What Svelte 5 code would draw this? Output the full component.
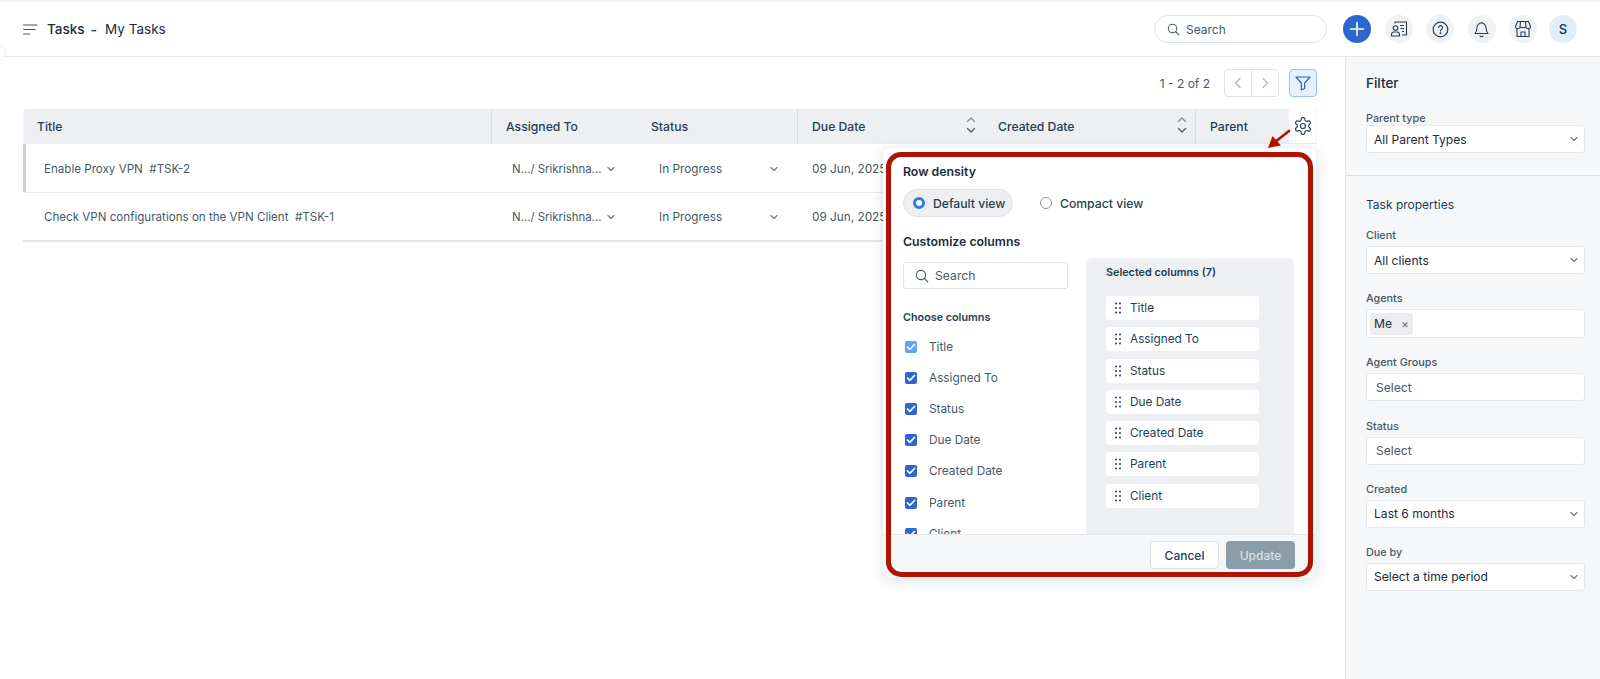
<script>
  const rows = ['Enable Proxy VPN  #TSK-2', 'Check VPN configurations on the VPN Client  #TSK-1'];
  const cols = ['Title', 'Assigned To', 'Status', 'Due Date', 'Created Date', 'Parent', 'Client'];
</script>

{#snippet chevron()}
  <svg class="chev" width="10" height="10" viewBox="0 0 10 10"><path d="M2 3.500 5 6.500 8 3.500" fill="none" stroke="#60758a" stroke-width="1.100" stroke-linecap="round" stroke-linejoin="round"/></svg>
{/snippet}
{#snippet sort()}
  <svg class="sort" width="10" height="18" viewBox="0 0 10 18"><path d="M1.500 5.500 5 2 8.500 5.500" fill="none" stroke="#7e8f9f" stroke-width="1.200" stroke-linecap="round" stroke-linejoin="round"/><path d="M1.500 12.500 5 16 8.500 12.500" fill="none" stroke="#475867" stroke-width="1.200" stroke-linecap="round" stroke-linejoin="round"/></svg>
{/snippet}
{#snippet mag(size)}
  <svg width={size} height={size} viewBox="0 0 14 14"><circle cx="6" cy="6" r="4.600" fill="none" stroke="#475867" stroke-width="1.100"/><path d="M9.500 9.500 12.800 12.800" stroke="#475867" stroke-width="1.100" stroke-linecap="round"/></svg>
{/snippet}
{#snippet grip()}
  <svg width="6" height="12" viewBox="0 0 6 12" fill="#283d52"><circle cx="1" cy="1.500" r="1"/><circle cx="5" cy="1.500" r="1"/><circle cx="1" cy="6" r="1"/><circle cx="5" cy="6" r="1"/><circle cx="1" cy="10.500" r="1"/><circle cx="5" cy="10.500" r="1"/></svg>
{/snippet}

<div class="page">
  <header class="topbar">
    <div class="head-left">
      <svg width="15" height="11" viewBox="0 0 15 11"><path d="M.500 1h13.500M.500 5.500h11.500M.500 10h6" stroke="#475867" stroke-width="1.100" stroke-linecap="round"/></svg>
      <span class="crumb">Tasks</span><span class="dash">-</span><span class="crumb">My Tasks</span>
    </div>
    <div class="head-right">
      <div class="gsearch">{@render mag(13)}<span>Search</span></div>
      <div class="round plus"><svg width="16" height="16" viewBox="0 0 16 16"><path d="M8 1.500v13M1.500 8h13" stroke="#fff" stroke-width="1.600" stroke-linecap="round"/></svg></div>
      <div class="round"><svg width="18" height="18" viewBox="0 0 18 18" fill="none" stroke="#283d52" stroke-width="1.100"><path d="M5 3.500V2h11.500v13H12"/><path d="M10 5.500h4M10.500 8.500h3.500M12 11.500h2"/><circle cx="5.500" cy="8" r="2.300"/><path d="M1.500 16v-1.500A2.500 2.500 0 0 1 4 12h3a2.500 2.500 0 0 1 2.500 2.500V16z"/></svg></div>
      <div class="round"><svg width="17" height="17" viewBox="0 0 17 17" fill="none" stroke="#283d52" stroke-width="1.200"><circle cx="8.500" cy="8.500" r="7.300"/><path d="M6.500 6.600a2 2 0 1 1 3 1.800c-.7.4-1 .8-1 1.600" stroke-linecap="round"/><circle cx="8.500" cy="12.300" r=".4" fill="#283d52"/></svg></div>
      <div class="round"><svg width="17" height="17" viewBox="0 0 17 17" fill="none" stroke="#283d52" stroke-width="1.100" stroke-linejoin="round"><path d="M8.500 2a4.500 4.500 0 0 0-4.500 4.500c0 3.500-1.200 5-2 6h13c-.8-1-2-2.500-2-6A4.500 4.500 0 0 0 8.500 2z"/><path d="M6.800 14.500a1.800 1.800 0 0 0 3.400 0M8.500 1v1"/></svg></div>
      <div class="round"><svg width="18" height="18" viewBox="0 0 18 18" fill="none" stroke="#283d52" stroke-width="1.100" stroke-linejoin="round"><path d="M3.500 1.500h11l2 5a2.300 2.300 0 0 1-4.500.600 2.400 2.400 0 0 1-3 0 2.400 2.400 0 0 1-3 0 2.300 2.300 0 0 1-4.500-.600z"/><path d="M3 9v7.500h12V9"/><path d="M7 16.500V12h4v4.500M6.500 1.500 6 7M11.500 1.500 12 7"/></svg></div>
      <div class="round avatar">S</div>
    </div>
  </header>
  <span class="handle"></span>

  <div class="content">
    <main class="main">
      <div class="pager">
        <span class="count">1 - 2 of 2</span>
        <div class="pgroup">
          <span class="pbtn"><svg width="8" height="12" viewBox="0 0 8 12"><path d="M6 1.500 1.500 6 6 10.500" fill="none" stroke="#a9b6c2" stroke-width="1.200" stroke-linecap="round" stroke-linejoin="round"/></svg></span>
          <span class="pbtn second"><svg width="8" height="12" viewBox="0 0 8 12"><path d="M2 1.500 6.500 6 2 10.500" fill="none" stroke="#a9b6c2" stroke-width="1.200" stroke-linecap="round" stroke-linejoin="round"/></svg></span>
        </div>
        <span class="funnel"><svg width="16" height="15" viewBox="0 0 16 15"><path d="M1 1h14L9.700 7v5.500L6.300 14V7z" fill="none" stroke="#2c5cc5" stroke-width="1.200" stroke-linejoin="round"/></svg></span>
      </div>

      <div class="table">
        <div class="thead">
          <div class="th t1">Title</div>
          <div class="th t2">Assigned To</div>
          <div class="th t3">Status</div>
          <div class="th t4">Due Date{@render sort()}</div>
          <div class="th t5">Created Date{@render sort()}</div>
          <div class="th t6">Parent</div>
          <div class="gear"><svg width="20" height="20" viewBox="0 0 24 24" fill="none" stroke="#283d52" stroke-width="1.400" stroke-linejoin="round"><path d="M12.200 2h-.4a2 2 0 0 0-2 2v.2a2 2 0 0 1-1 1.700l-.4.300a2 2 0 0 1-2 0l-.2-.1a2 2 0 0 0-2.700.700l-.2.400a2 2 0 0 0 .7 2.700l.2.100a2 2 0 0 1 1 1.700v.6a2 2 0 0 1-1 1.700l-.2.100a2 2 0 0 0-.7 2.700l.2.400a2 2 0 0 0 2.700.7l.2-.1a2 2 0 0 1 2 0l.4.300a2 2 0 0 1 1 1.700v.2a2 2 0 0 0 2 2h.4a2 2 0 0 0 2-2v-.2a2 2 0 0 1 1-1.700l.4-.300a2 2 0 0 1 2 0l.2.100a2 2 0 0 0 2.700-.7l.2-.4a2 2 0 0 0-.7-2.700l-.2-.1a2 2 0 0 1-1-1.700v-.6a2 2 0 0 1 1-1.700l.2-.1a2 2 0 0 0 .7-2.700l-.2-.4a2 2 0 0 0-2.700-.7l-.2.100a2 2 0 0 1-2 0l-.4-.3a2 2 0 0 1-1-1.700V4a2 2 0 0 0-2-2z"/><circle cx="12" cy="12" r="3"/></svg></div>
        </div>
        {#each rows as r, i}
          <div class="tr" class:first={i === 0}>
            <div class="td t1 ttl">{r}</div>
            <div class="td t2 asg">N.../ Srikrishna...{@render chevron()}</div>
            <div class="td t3 sts"><span>In Progress</span>{@render chevron()}</div>
            <div class="td t4 dt">09 Jun, 2025</div>
          </div>
        {/each}
      </div>

      <section class="panel">
        <div class="ptop">
          <div class="ph">Row density</div>
          <div class="density">
            <div class="opt on"><span class="radio picked"></span>Default view</div>
            <div class="opt off"><span class="radio"></span>Compact view</div>
          </div>
          <div class="ph cust">Customize columns</div>
        </div>
        <div class="pcols">
          <div class="pleft">
            <div class="psearch">{@render mag(14)}<span>Search</span></div>
            <div class="choose">Choose columns</div>
            {#each cols as c, i}
              <div class="check">
                <span class="box" class:dim={i === 0}><svg width="10" height="8" viewBox="0 0 10 8"><path d="M1.500 4 3.800 6.300 8.500 1.500" fill="none" stroke="#fff" stroke-width="1.700" stroke-linecap="round" stroke-linejoin="round"/></svg></span>
                <span>{c}</span>
              </div>
            {/each}
          </div>
          <div class="pright">
            <div class="seltitle">Selected columns (7)</div>
            {#each cols as c}
              <div class="chip">{@render grip()}<span>{c}</span></div>
            {/each}
          </div>
        </div>
        <div class="pfoot">
          <span class="btn cancel">Cancel</span>
          <span class="btn update">Update</span>
        </div>
        <div class="redframe"></div>
      </section>
      <svg class="arrow" width="26" height="24" viewBox="0 0 26 24"><path d="M23 3 9 14" stroke="#b01400" stroke-width="2.600" stroke-linecap="round"/><path d="M2 20 6.500 8 15 17.500z" fill="#b01400"/></svg>
    </main>

    <aside class="side">
      <div class="sblock">
        <div class="stitle">Filter</div>
        <div class="lab ptype">Parent type</div>
        <div class="sel">All Parent Types{@render chevron()}</div>
      </div>
      <div class="sblock props">
        <div class="stitle2">Task properties</div>
        <div class="lab">Client</div>
        <div class="sel">All clients{@render chevron()}</div>
        <div class="lab">Agents</div>
        <div class="sel tags"><span class="tag">Me<i>×</i></span></div>
        <div class="lab">Agent Groups</div>
        <div class="sel ph2">Select</div>
        <div class="lab">Status</div>
        <div class="sel ph2">Select</div>
        <div class="lab">Created</div>
        <div class="sel">Last 6 months{@render chevron()}</div>
        <div class="lab">Due by</div>
        <div class="sel">Select a time period{@render chevron()}</div>
      </div>
    </aside>
  </div>
</div>

<style>
  :global(body) { margin: 0; background: #fff; }
  .page { width: 1600px; height: 679px; overflow: hidden; position: relative; font-family: Inter, "Liberation Sans", sans-serif; color: #12344d; display: flex; flex-direction: column; box-sizing: border-box; border-top: 2px solid #eef2fb; }
  .topbar { height: 54px; flex: none; display: flex; justify-content: space-between; align-items: center; border-bottom: 1px solid #e4e9ee; padding: 0 23px; box-sizing: content-box; }
  .head-left { display: flex; align-items: center; }
  .crumb { font-size: 13.500px; font-weight: 500; color: #1b2b3d; }
  .head-left svg { margin-right: 9px; }
  .head-left .dash { margin: 0 8px 0 6px; font-size: 14px; font-weight: 500; }
  .head-left .crumb:last-child { font-weight: 400; }
  .head-right { display: flex; align-items: center; gap: 13.500px; }
  .gsearch { width: 173px; height: 28px; box-sizing: border-box; border: 1px solid #dde3e9; border-radius: 14px; display: flex; align-items: center; gap: 6px; padding-left: 12px; font-size: 12px; color: #475867; margin-right: 2.500px; }
  .round { width: 28px; height: 28px; border-radius: 50%; background: #f0f2f4; display: flex; align-items: center; justify-content: center; }
  .plus { background: #2c66cf; }
  .avatar { background: #e0eefb; font-size: 13px; font-weight: 500; color: #12344d; margin-left: -1.500px; }
  .handle { position: absolute; left: -12px; top: 42px; width: 16px; height: 16px; border-radius: 50%; background: #fff; border: 1px solid #eceff3; }

  .content { flex: 1; display: flex; min-height: 0; }
  .main { width: 1345px; flex: none; box-sizing: border-box; padding: 12px 28px 0 23px; position: relative; }
  .pager { height: 28px; display: flex; align-items: center; justify-content: flex-end; }
  .count { font-size: 12px; color: #475867; margin-right: 14px; }
  .pgroup { display: flex; width: 55px; height: 28px; box-sizing: border-box; border: 1px solid #dde3e9; border-radius: 4px; margin-right: 10px; }
  .pbtn { flex: 1; display: flex; align-items: center; justify-content: center; }
  .pbtn.second { border-left: 1px solid #e4e9ee; }
  .funnel { width: 28px; height: 28px; box-sizing: border-box; display: flex; align-items: center; justify-content: center; background: #e5f2fd; border: 1px solid #92c3f2; border-radius: 4px; }

  .table { margin-top: 12px; }
  .thead { display: flex; height: 35px; }
  .th { background: #edeff2; display: flex; align-items: center; font-size: 12.200px; font-weight: 500; color: #283d52; box-sizing: border-box; height: 35px; position: relative; }
  .t1 { width: 468px; padding-left: 14px; flex: none; box-sizing: border-box; }
  .t2 { width: 146px; padding-left: 14px; flex: none; box-sizing: border-box; }
  .t3 { width: 160px; padding-left: 14px; flex: none; box-sizing: border-box; }
  .t4 { width: 186px; padding-left: 14px; flex: none; box-sizing: border-box; }
  .t5 { width: 212px; padding-left: 15px; flex: none; box-sizing: border-box; }
  .t6 { width: 94px; padding-left: 14px; flex: none; box-sizing: border-box; }
  .th.t2, .th.t4, .th.t6 { border-left: 1px solid #d8dee4; }
  .th.t1 { border-radius: 4px 0 0 0; }
  .sort { position: absolute; right: 7px; top: 7px; }
  .th.t5 .sort { right: 8px; }
  .gear { width: 28px; height: 35px; display: flex; align-items: center; justify-content: center; border: 1px solid #eef0f3; border-width: 0 1px 1px 0; box-sizing: border-box; }

  .tr { display: flex; height: 49px; box-sizing: border-box; width: 1266px; border-bottom: 1px solid #ebeff3; align-items: center; padding-top: 1px; }
  .tr:last-child { border-bottom: 2px solid #e0e5ea; }
  .tr.first { box-shadow: inset 3px 0 0 #c6d3de; }
  .td { font-size: 11.800px; color: #475867; display: flex; align-items: center; }
  .ttl { padding-left: 21px; white-space: pre; font-size: 11.600px; }
  .asg { padding-left: 21px; white-space: pre; font-size: 11.400px; }
  .dt { padding-left: 15px; }
  .chev { margin-left: 5px; flex: none; }
  .sts { padding-left: 22px; }
  .sts span { width: 104.500px; }

  .panel { position: absolute; left: 883px; top: 91px; width: 433px; height: 430px; background: #fff; border-radius: 8px; box-shadow: 0 2px 14px rgba(18,52,77,.16); display: flex; flex-direction: column; overflow: hidden; }
  .redframe { position: absolute; left: 3px; top: 4px; right: 3px; bottom: 1px; border: 5px solid #b01400; border-radius: 15px; pointer-events: none; }
  .ptop { padding: 16px 20px 0; height: 110px; box-sizing: border-box; flex: none; }
  .ph { font-size: 12.300px; font-weight: 600; color: #1b2b3d; line-height: 16px; }
  .density { display: flex; align-items: center; margin-top: 9px; height: 28px; }
  .opt { display: flex; align-items: center; font-size: 12.200px; font-weight: 500; color: #283d52; gap: 8px; height: 28px; white-space: nowrap; }
  .opt.on { width: 110px; background: #edeff2; border: 1px solid #dfe3e8; border-radius: 14px; box-sizing: border-box; padding-left: 9px; margin-right: 27px; }
  .radio { width: 12px; height: 12px; box-sizing: border-box; border-radius: 50%; border: 1px solid #8a9caa; background: #fff; flex: none; }
  .radio.picked { border: 3.500px solid #2a7de1; }
  .cust { margin-top: 17px; }
  .pcols { display: flex; height: 276px; flex: none; overflow: hidden; padding-left: 20px; }
  .pleft { width: 183px; flex: none; padding-top: 4px; box-sizing: border-box; }
  .psearch { width: 165px; height: 27px; box-sizing: border-box; border: 1px solid #dde3e9; border-radius: 3px; display: flex; align-items: center; gap: 6px; padding-left: 11px; font-size: 12.200px; color: #475867; }
  .choose { font-size: 10.800px; font-weight: 600; color: #283d52; margin-top: 22px; line-height: 14px; margin-bottom: 6px; }
  .check { height: 31.200px; display: flex; align-items: center; gap: 6px; font-size: 11.800px; color: #475867; padding-left: 2px; }
  .box { width: 12px; height: 12px; border-radius: 2px; background: #2c66cf; display: flex; align-items: center; justify-content: center; margin-right: 6px; flex: none; }
  .box.dim { background: #5ea6f3; }
  .pright { width: 208px; height: 276px; background: #edeff2; border-radius: 6px 6px 0 0; padding: 8px 0 0 20px; box-sizing: border-box; flex: none; }
  .seltitle { font-size: 10.800px; font-weight: 600; color: #283d52; line-height: 14px; margin-bottom: 16px; }
  .chip { width: 153px; height: 24px; background: #fff; border-radius: 4px; display: flex; align-items: center; gap: 9px; padding-left: 9px; box-sizing: border-box; font-size: 11.800px; color: #283d52; margin-bottom: 7.300px; }
  .pfoot { height: 44px; flex: none; background: #f5f7f9; border-top: 1px solid #e4e9ee; display: flex; justify-content: flex-end; gap: 7px; padding: 6px 21px 0 0; box-sizing: border-box; }
  .btn { width: 69px; height: 28px; box-sizing: border-box; border-radius: 4px; display: flex; align-items: center; justify-content: center; font-size: 12px; font-weight: 500; }
  .cancel { background: #fff; border: 1px solid #dde3e9; color: #283d52; }
  .update { background: #8a9caa; color: #d8e0e6; }
  .arrow { position: absolute; left: 1266px; top: 71px; }

  .side { flex: 1; background: #f5f7f9; border-left: 1px solid #e4e9ee; box-sizing: border-box; min-width: 0; }
  .sblock { padding: 0 15px 0 20px; }
  .sblock:first-child { height: 119px; border-bottom: 1px solid #dfe3e8; padding-top: 17px; box-sizing: border-box; }
  .stitle { font-size: 13.500px; font-weight: 500; color: #1b2b3d; line-height: 18px; margin-bottom: 20px; }
  .stitle2 { font-size: 12px; font-weight: 400; color: #283d52; padding-top: 20px; line-height: 18px; margin-bottom: 15px; }
  .lab { font-size: 10.800px; color: #475867; line-height: 14px; margin-bottom: 3px; font-weight: 500; }
  .lab.ptype { margin-bottom: -1px; }
  .sel { height: 28px; box-sizing: border-box; background: #fff; border: 1px solid #e4e9ee; border-radius: 3px; display: flex; align-items: center; justify-content: space-between; padding: 0 5px 0 7px; font-size: 12.100px; color: #1b2b3d; margin-bottom: 18.200px; }
  .props .sel:last-child { margin-bottom: 0; }
  .ph2 { padding-left: 9px; color: #475867; }
  .tags { padding-left: 3px; height: 29px; justify-content: flex-start; }
  .tag { width: 43px; height: 22px; background: #ecedf0; border-radius: 3px; display: flex; align-items: center; padding-left: 4px; box-sizing: border-box; }
  .tag i { font-style: normal; font-size: 12px; color: #60758a; margin-left: 9px; }
</style>
